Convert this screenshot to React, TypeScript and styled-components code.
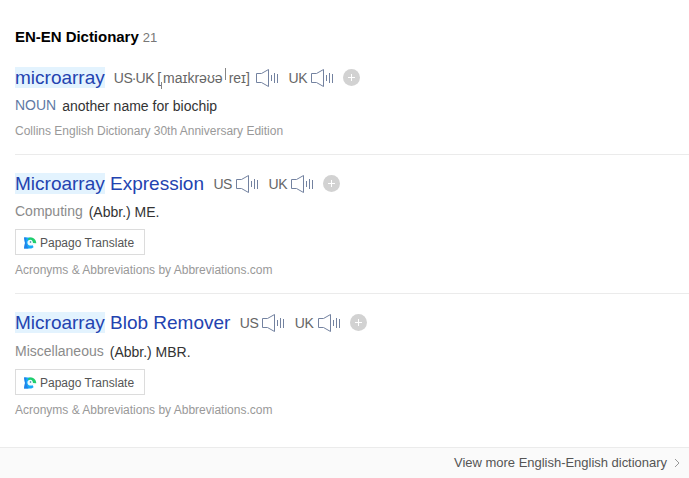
import React from 'react';
import styled, { createGlobalStyle } from 'styled-components';

const GlobalStyle = createGlobalStyle`
  * { box-sizing: border-box; }
  body {
    margin: 0;
    background: #fff;
    font-family: "Liberation Sans", Arial, sans-serif;
    overflow: hidden;
  }
`;

const Page = styled.main`
  display: flex;
  flex-direction: column;
  height: 478px;
`;

const SectionHeader = styled.header`
  display: flex;
  align-items: baseline;
  gap: 4px;
  height: 46px;
  padding: 28px 0 0 15px;
  line-height: 18px;
`;

const SectionTitle = styled.h3`
  margin: 0;
  font-size: 15px;
  font-weight: 700;
  letter-spacing: -0.03px;
  color: #000;
`;

const Count = styled.span`
  font-size: 13px;
  color: #777;
`;

const EntryList = styled.div`
  flex: 1;
  padding-left: 15px;
`;

const Entry = styled.article<{ $first?: boolean }>`
  height: ${(p) => (p.$first ? '108px' : '139px')};
  padding-top: ${(p) => (p.$first ? '20px' : '17px')};
  border-top: ${(p) => (p.$first ? '0' : '1px solid #ebebeb')};
`;

const TitleRow = styled.div`
  display: flex;
  align-items: center;
  height: 24px;
`;

const Word = styled.a`
  font-size: 19px;
  line-height: 22px;
  color: #2343b0;
  white-space: pre;
`;

const Highlight = styled.mark`
  color: inherit;
  background: #e3f3fe;
`;

const Accent = styled.span<{ $gap?: number }>`
  margin-left: ${(p) => p.$gap ?? 9.4}px;
  font-size: 14px;
  letter-spacing: -0.4px;
  line-height: 22px;
  color: #666;
  white-space: pre;
`;

const Dot = styled.span`
  margin: 0 -0.6px;
`;

const Phonetic = styled.span`
  display: flex;
  width: 95px;
  margin-left: 3px;
  font-size: 14px;
  line-height: 22px;
  color: #666;
`;

const Stress = styled.i<{ $low?: boolean }>`
  flex: none;
  width: 1px;
  height: ${(p) => (p.$low ? '7px' : '12px')};
  margin: ${(p) => (p.$low ? '15px 1px 0 0' : '1px 3px 0 2px')};
  background: #858585;
`;

const SpeakerSvg = styled.svg`
  flex: none;
  margin-left: 4px;
`;

const AddButton = styled.button`
  display: flex;
  flex: none;
  width: 17px;
  height: 17px;
  margin: 0 0 1px 9px;
  padding: 0;
  border: 0;
  border-radius: 50%;
  background: #d2d2d2;
`;

const MeaningRow = styled.div<{ $top: number }>`
  display: flex;
  gap: 6px;
  margin-top: ${(p) => p.$top}px;
  font-size: 14px;
  line-height: 20px;
`;

const Tag = styled.span<{ $noun?: boolean }>`
  color: ${(p) => (p.$noun ? '#6079a5' : '#8b8b8b')};
`;

const Meaning = styled.span`
  padding-top: 1px;
  color: #333;
`;

const PapagoButton = styled.button`
  display: flex;
  align-items: center;
  gap: 3px;
  width: 130px;
  height: 26px;
  margin: 7px 0 0;
  padding: 1px 0 0 8px;
  border: 1px solid #dcdcdc;
  background: #fff;
  font: 12px "Liberation Sans", Arial, sans-serif;
  color: #555;
`;

const Source = styled.p<{ $top: number }>`
  margin: ${(p) => p.$top}px 0 0;
  font-size: 12px;
  line-height: 16px;
  color: #999;
`;

const Footer = styled.footer`
  display: flex;
  align-items: center;
  justify-content: flex-end;
  height: 31px;
  padding: 0 8px 1px 0;
  border-top: 1px solid #ebebeb;
  background: #fafafa;
`;

const MoreLink = styled.a`
  display: flex;
  align-items: center;
  gap: 7px;
  font-size: 13px;
  letter-spacing: -0.02px;
  color: #555;
`;

const Speaker = () => (
  <SpeakerSvg width="23" height="20" viewBox="0 0 23 20" fill="none" stroke="#7382a0">
    <path d="M5.5 5.5H0.5V14.5H5.5L12.5 18.5V1.5L5.5 5.5Z" />
    <path d="M15.5 7V13M18.5 5V15M21.5 6V15" />
  </SpeakerSvg>
);

const Add = () => (
  <AddButton aria-label="Add">
    <svg width="17" height="17" viewBox="0 0 17 17" stroke="#fff">
      <path d="M8.5 5V12M5 8.5H12" />
    </svg>
  </AddButton>
);

const Papago = () => (
  <PapagoButton>
    <svg width="13" height="12" viewBox="0 0 13 12">
      <path d="M0 0.5H6.5L9.5 10.2C8.6 11 7.5 11.5 6.2 11.5H0L1 6Z" fill="#16a9f8" />
      <path d="M0 0.5H2.5C1.5 4 2 8 4.5 11.5H0L1 6Z" fill="#2380e8" />
      <path d="M3.8 2C4.6 1 5.4.5 6.8.5C10 .5 12.2 3 12.2 6.3H8.2Z" fill="#1fce6c" />
      <path d="M3.4 5.7C3.4 3.6 4.8 2.8 6.3 2.8C8.2 2.8 8.8 4.3 9 6L11.8 7L9 8.2C7.4 8.7 3.4 9 3.4 5.7Z" fill="#eefcff" />
      <circle cx="6.5" cy="5" r=".8" fill="#286b91" />
    </svg>
    <span>Papago Translate</span>
  </PapagoButton>
);

type AbbreviationProps = { rest: string; field: string; meaning: string; meaningTop: number };

const Abbreviation = ({ rest, field, meaning, meaningTop }: AbbreviationProps) => (
  <Entry>
    <TitleRow>
      <Word><Highlight>Microarray</Highlight> {rest}</Word>
      <Accent>US</Accent>
      <Speaker />
      <Accent>UK</Accent>
      <Speaker />
      <Add />
    </TitleRow>
    <MeaningRow $top={meaningTop}>
      <Tag>{field}</Tag>
      <Meaning>{meaning}</Meaning>
    </MeaningRow>
    <Papago />
    <Source $top={7}>Acronyms &amp; Abbreviations by Abbreviations.com</Source>
  </Entry>
);

export default function App() {
  return (
    <>
      <GlobalStyle />
      <Page>
        <SectionHeader>
          <SectionTitle>EN-EN Dictionary</SectionTitle>
          <Count>21</Count>
        </SectionHeader>
        <EntryList>
          <Entry $first>
            <TitleRow>
              <Word><Highlight>microarray</Highlight></Word>
              <Accent $gap={9}>US<Dot>·</Dot>UK</Accent>
              <Phonetic>
                [<Stress $low />maɪkrəʊə<Stress />reɪ]
              </Phonetic>
              <Speaker />
              <Accent>UK</Accent>
              <Speaker />
              <Add />
            </TitleRow>
            <MeaningRow $top={5}>
              <Tag $noun>NOUN</Tag>
              <Meaning>another name for biochip</Meaning>
            </MeaningRow>
            <Source $top={7}>Collins English Dictionary 30th Anniversary Edition</Source>
          </Entry>
          <Abbreviation rest="Expression" field="Computing" meaning="(Abbr.) ME." meaningTop={5} />
          <Abbreviation rest="Blob Remover" field="Miscellaneous" meaning="(Abbr.) MBR." meaningTop={6} />
        </EntryList>
        <Footer>
          <MoreLink>
            View more English-English dictionary
            <svg width="7" height="10" viewBox="0 0 7 10" fill="none" stroke="#999">
              <path d="M1 1L5 5L1 9" />
            </svg>
          </MoreLink>
        </Footer>
      </Page>
    </>
  );
}
